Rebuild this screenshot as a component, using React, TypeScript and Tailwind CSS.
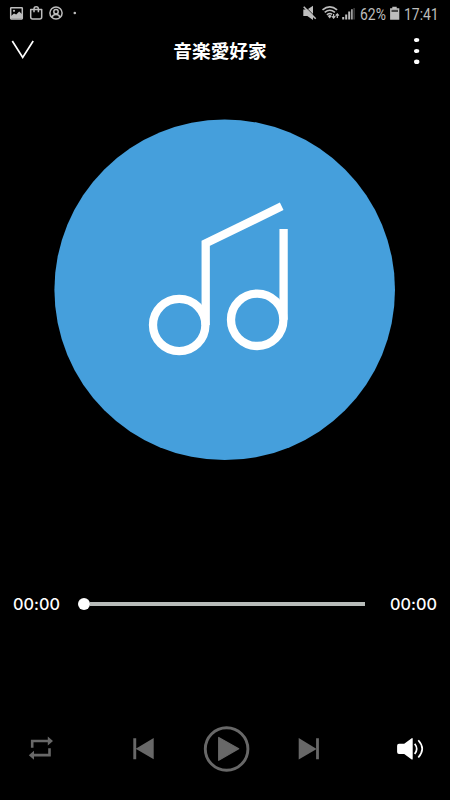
import React from 'react';

function StatusBar() {
  return (
    <div className="flex h-[27px] justify-between text-[#bdbdbd]">
      <svg className="h-[27px] w-[100px]" viewBox="0 0 100 27" fill="none" stroke="currentColor" strokeWidth="1.5">
        <rect x="10.700" y="7.700" width="11.600" height="11.200" rx="0.600" />
        <path d="M11 18.600v-2.600l3-2.500 2.200 1 3-3 3 2.700v4.400z" fill="currentColor" stroke="none" />
        <circle cx="14" cy="10.800" r="1.100" fill="currentColor" stroke="none" />
        <path d="M30.700 9.500h11V17a2 2 0 0 1-2 2h-7a2 2 0 0 1-2-2z" strokeLinejoin="round" />
        <path d="M34 12.200V9a2.200 2.200 0 0 1 4.400 0v3.200" />
        <circle cx="56" cy="13" r="6.100" />
        <circle cx="56" cy="11.800" r="2.200" />
        <path d="M52 17.200c.7-2 2-2.700 4-2.700s3.300.7 4 2.700" />
        <circle cx="74.800" cy="13" r="1.300" fill="currentColor" stroke="none" />
      </svg>
      <div className="flex items-center pt-[2px]">
        <svg className="-mt-[2px] h-[27px] w-[60px] shrink-0" viewBox="300 0 60 27" fill="none" stroke="currentColor" strokeWidth="1.600">
          <path d="M303.300 9.500h4l5.700-3.700v14.200l-5.700-4h-4z" fill="currentColor" stroke="none" />
          <path d="M305 6.500l11 11" stroke="#000" strokeWidth="1" />
          <path d="M303.700 6.800l12 12" strokeWidth="1.600" />
          <path d="M322.500 9.900q7.300-6.200 14.600 0M324.700 12.400q5.100-4.300 10.200 0M326.900 14.800q2.900-2.300 5.200-.4" />
          <path d="M327.700 16.100l2.200-1.600 1.800 1.600-2 2.500z" fill="currentColor" stroke="none" />
          <path d="M333.600 14v4M331.900 16.200l1.700 1.900 1.700-1.900M337.300 18v-4M335.700 15.600l1.600-1.700 1.600 1.700" strokeWidth="1.200" />
          <path d="M343.200 19.500V17M346.200 19.500V14.500M349.200 19.500V11.500" strokeWidth="2" />
          <path d="M351.900 19.500V9.300" strokeWidth="1.500" />
          <path d="M354.100 19.500V8" stroke="#444" strokeWidth="1.400" />
        </svg>
        <span className="w-[29px] origin-left scale-x-[.87] whitespace-nowrap font-[Roboto,sans-serif] text-[16px] leading-[24px]">62%</span>
        <svg className="-mt-[2px] h-[27px] w-[15px] shrink-0" viewBox="389 0 15 27">
          <path d="M392.300 6.800h4.400v1.500h2.600V19.800h-9.200V8.300h2.200z" fill="currentColor" />
          <path d="M391.500 9.800h6.500v2.200h-6.500z" fill="#484848" />
        </svg>
        <span className="w-[46px] origin-left scale-x-[.87] whitespace-nowrap font-[Roboto,sans-serif] text-[16px] leading-[24px]">17:41</span>
      </div>
    </div>
  );
}

function Header() {
  return (
    <header className="flex h-[48px] items-center justify-between">
      <button aria-label="Close" className="h-[48px] w-[60px]">
        <svg className="h-[48px] w-[60px]" viewBox="0 27 60 48" fill="none" stroke="#fff" strokeWidth="1.700">
          <path d="M12.300 41L22.700 57.500 33.200 41" />
        </svg>
      </button>
      <h1 className="mb-[2px] w-[120px] text-center font-['Noto_Sans_CJK_JP',sans-serif] text-[18.700px] leading-[46px] font-bold whitespace-nowrap">音楽愛好家</h1>
      <button aria-label="Menu" className="h-[48px] w-[70px]">
        <svg className="h-[48px] w-[70px]" viewBox="380 27 70 48" fill="#fff">
          <ellipse cx="416.700" cy="40" rx="2.700" ry="2.100" />
          <ellipse cx="416.700" cy="51" rx="2.700" ry="2.100" />
          <ellipse cx="416.700" cy="61.800" rx="2.700" ry="2.300" />
        </svg>
      </button>
    </header>
  );
}

function Artwork() {
  return (
    <div className="mt-[44px] ml-[54px] size-[342px]">
      <svg className="size-full" viewBox="54 119 342 342" fill="none" stroke="#fff" strokeWidth="8.300">
        <circle cx="224.700" cy="289.800" r="170.300" fill="#459fdc" stroke="none" />
        <circle cx="179.200" cy="325" r="26.200" />
        <circle cx="257.200" cy="319.800" r="26.200" />
        <path d="M205.700 325V243.300L281.700 206.300" />
        <path d="M283.600 319.800V229" />
      </svg>
    </div>
  );
}

function Progress() {
  return (
    <div className="mt-[123px] flex h-[40px] items-center font-[Inter,sans-serif] text-[15.500px] font-medium [font-feature-settings:'calt'_0]">
      <span className="ml-[13px] w-[65px] origin-left scale-x-[1.050] pt-[2px]">00:00</span>
      <div className="flex h-[12px] w-[287px] items-center">
        <div className="size-[12px] rounded-full bg-white" />
        <div className="h-[4px] flex-1 bg-[#b8bcba]" />
      </div>
      <span className="ml-[24.500px] origin-left scale-x-[1.050] pt-[2px]">00:00</span>
    </div>
  );
}

function Controls() {
  return (
    <div className="mt-[91px] flex h-[65px] items-center text-[#686868]">
      <button aria-label="Repeat" className="h-[65px] w-[100px]">
        <svg className="h-[65px] w-[100px]" viewBox="0 715 100 65" fill="none" stroke="currentColor" strokeWidth="2.600">
          <path d="M32.200 747.800V741h16.500M49.500 748.200v6.900H33" />
          <path d="M47.800 736.600l5.200 4.500-5.200 4.400zM34 750.800l-5.200 4.400 5.200 4.500z" fill="currentColor" stroke="none" />
        </svg>
      </button>
      <button aria-label="Previous" className="h-[65px] w-[90px]">
        <svg className="h-[65px] w-[90px]" viewBox="100 715 90 65" fill="currentColor">
          <path d="M133.300 738.200h2.900v21h-2.900zM153.700 738.100v21.200l-18-10.600z" />
        </svg>
      </button>
      <button aria-label="Play" className="h-[65px] w-[80px]">
        <svg className="h-[65px] w-[80px]" viewBox="190 715 80 65" fill="currentColor">
          <circle cx="226.600" cy="749" r="21.300" fill="none" stroke="currentColor" strokeWidth="2.900" />
          <path d="M218.700 737.500v22.800l20-11.500z" stroke="currentColor" strokeLinejoin="round" strokeWidth="1.200" />
        </svg>
      </button>
      <button aria-label="Next" className="h-[65px] w-[100px]">
        <svg className="h-[65px] w-[100px]" viewBox="270 715 100 65" fill="currentColor">
          <path d="M298.700 738v21.500l18-10.500zM316.100 738.200h2.800v21h-2.800z" />
        </svg>
      </button>
      <button aria-label="Volume" className="h-[65px] w-[80px]">
        <svg className="h-[65px] w-[80px]" viewBox="370 715 80 65" fill="none" stroke="#fff" strokeWidth="1.700">
          <path d="M399 743.700h5.200l7.500-5.500q1-.4 1 .8v19.700q0 1.200-1 .7l-7.500-5.500H399q-1.900 0-1.900-1.900v-6.300q0-2 1.900-2z" fill="#fff" stroke="none" />
          <path d="M414.700 743.800q4 5.100 0 10.200M418.300 740.300q7.800 8.500 0 17.200" />
        </svg>
      </button>
    </div>
  );
}

export default function App() {
  return (
    <main className="h-[800px] w-[450px] overflow-hidden bg-black text-white">
      <StatusBar />
      <Header />
      <Artwork />
      <Progress />
      <Controls />
    </main>
  );
}
